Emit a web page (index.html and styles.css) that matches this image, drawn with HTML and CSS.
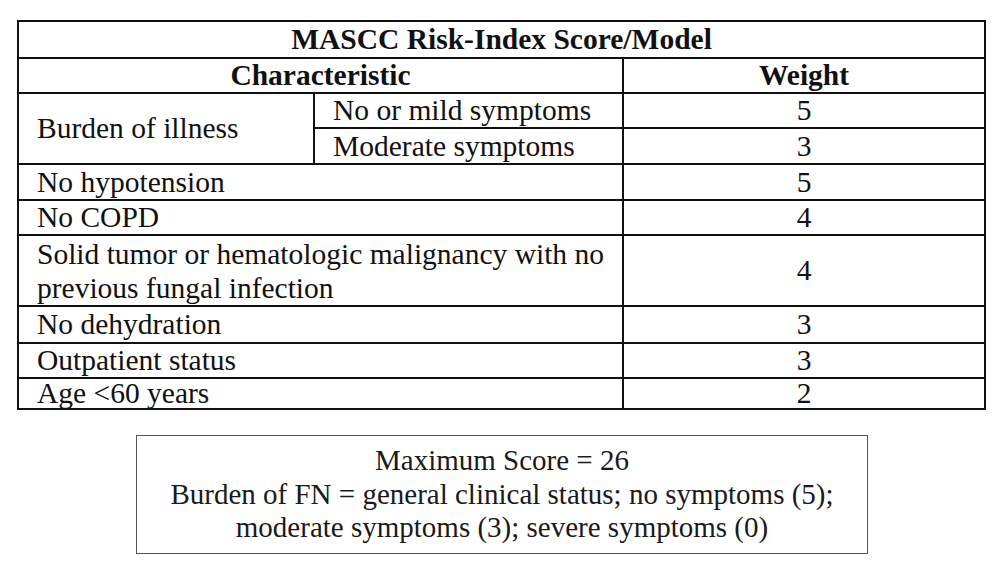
FILE: index.html
```html
<!DOCTYPE html>
<html>
<head>
<meta charset="utf-8">
<link rel="stylesheet" href="styles.css">
</head>
<body>
<div class="page">
  <table class="mascc">
    <colgroup>
      <col class="c1"><col class="c2"><col class="c3">
    </colgroup>
    <tr class="r-title"><th colspan="3">MASCC Risk-Index Score/Model</th></tr>
    <tr class="r-head"><th colspan="2">Characteristic</th><th>Weight</th></tr>
    <tr class="r-33"><td rowspan="2" class="lbl">Burden of illness</td><td class="lbl">No or mild symptoms</td><td class="num">5</td></tr>
    <tr class="r-34"><td class="lbl">Moderate symptoms</td><td class="num">3</td></tr>
    <tr class="r-34"><td colspan="2" class="lbl">No hypotension</td><td class="num">5</td></tr>
    <tr class="r-33"><td colspan="2" class="lbl">No COPD</td><td class="num">4</td></tr>
    <tr class="r-tall"><td colspan="2" class="lbl">Solid tumor or hematologic malignancy with no previous fungal infection</td><td class="num">4</td></tr>
    <tr class="r-35"><td colspan="2" class="lbl">No dehydration</td><td class="num">3</td></tr>
    <tr class="r-33"><td colspan="2" class="lbl">Outpatient status</td><td class="num">3</td></tr>
    <tr class="r-last"><td colspan="2" class="lbl">Age &lt;60 years</td><td class="num">2</td></tr>
  </table>
  <div class="note">
    <p class="line">Maximum Score = 26</p>
    <p class="line">Burden of FN = general clinical status; no symptoms (5);</p>
    <p class="line">moderate symptoms (3); severe symptoms (0)</p>
  </div>
</div>
</body>
</html>
```
FILE: styles.css
```css
html, body {
  margin: 0;
  padding: 0;
  background: #ffffff;
}
.page {
  width: 1000px;
  height: 568px;
  padding-top: 20px;
  box-sizing: border-box;
  color: #111111;
}
.mascc {
  margin-left: 17px;
  width: 967px;
  border-collapse: collapse;
  table-layout: fixed;
}
.c1 { width: 296px; }
.c2 { width: 309px; }
.c3 { width: 362px; }
.mascc th, .mascc td {
  font-family: "Liberation Serif", serif;
  font-size: 29.5px;
  line-height: 29px;
  color: #111111;
  border: 2px solid #111111;
  padding: 0;
  vertical-align: middle;
}
.mascc th {
  font-weight: bold;
  text-align: center;
}
.mascc td.lbl {
  text-align: left;
  padding-left: 18px;
}
.mascc td.num { text-align: center; }
.r-title th { height: 35px; }
.r-head th { height: 33px; }
.r-33 td { height: 33px; }
.r-34 td { height: 34px; }
.r-35 td { height: 35px; }
.r-last td { height: 29px; }
.r-tall td { height: 69px; }
.r-tall td.lbl { line-height: 34px; }
.note {
  margin: 25px 0 0 136px;
  width: 732px;
  height: 119px;
  box-sizing: border-box;
  border: 1px solid #555555;
  padding-top: 8px;
  text-align: center;
}
.line {
  margin: 0;
  font-family: "Liberation Serif", serif;
  font-size: 29px;
  line-height: 33.5px;
  color: #1a1a1a;
}
```
